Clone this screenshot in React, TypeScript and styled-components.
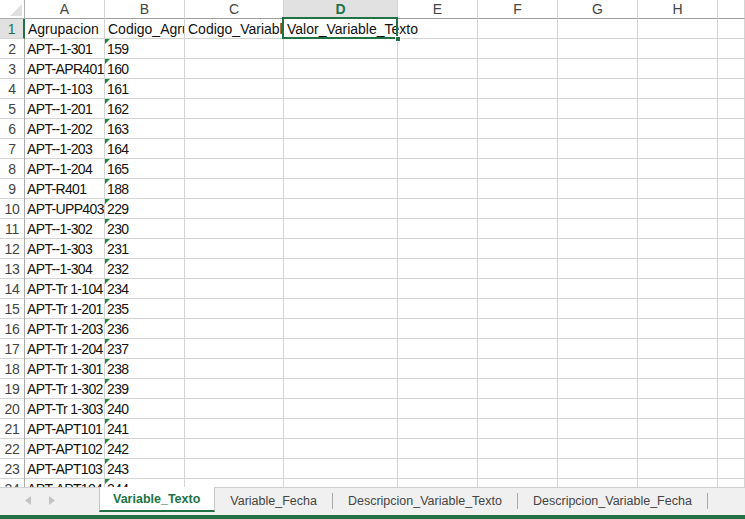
import React from "react";
import styled, { createGlobalStyle, css } from "styled-components";

const GREEN = "#217346";

const Global = createGlobalStyle`
  html, body { margin: 0; padding: 0; width: 745px; height: 519px; overflow: hidden; background: #fff; }
  * { box-sizing: border-box; }
`;

const Page = styled.div`
  width: 745px;
  height: 519px;
  display: flex;
  flex-direction: column;
  font-family: "Liberation Sans", Arial, sans-serif;
`;

const Sheet = styled.div`
  position: relative;
  height: 487px;
  overflow: hidden;
  background: #fff;
`;

const Grid = styled.div`
  display: grid;
  grid-template-columns: 25px 80px 80px 99px 114px 80px 80px 80px 80px 1fr;
  grid-template-rows: 19px;
  grid-auto-rows: 20px;
`;

const Corner = styled.div`
  position: relative;
  border-right: 1px solid #ababab;
  border-bottom: 1px solid #ababab;
  background: #fff;
  &::after {
    content: "";
    position: absolute;
    right: 2px;
    bottom: 2px;
    width: 0;
    height: 0;
    border-left: 12px solid transparent;
    border-bottom: 12px solid #dfdfdf;
  }
`;

const ColHeader = styled.div<{ $selected?: boolean }>`
  display: flex;
  align-items: center;
  justify-content: center;
  font-size: 14px;
  color: #444;
  border-right: 1px solid #d4d4d4;
  border-bottom: 1px solid #9f9f9f;
  background: #fff;
  ${(p) =>
    p.$selected &&
    css`
      background: #e1e1e1;
      color: ${GREEN};
      font-weight: bold;
    `}
`;

const RowHeader = styled.div<{ $selected?: boolean }>`
  display: flex;
  align-items: center;
  justify-content: center;
  font-size: 14px;
  color: #444;
  letter-spacing: -0.3px;
  border-right: 1px solid #ababab;
  border-bottom: 1px solid #d4d4d4;
  background: #fff;
  padding-top: 1px;
  ${(p) =>
    p.$selected &&
    css`
      background: #e1e1e1;
      color: ${GREEN};
      border-right: 2px solid ${GREEN};
    `}
`;

const Cell = styled.div<{ $clip?: boolean; $flag?: boolean; $tight?: boolean }>`
  position: relative;
  display: flex;
  align-items: center;
  padding: 1px 0 0 ${(p) => (p.$tight ? "2px" : "3px")};
  font-size: 14px;
  letter-spacing: ${(p) => (p.$tight ? "-0.65px" : "0")};
  color: #111;
  white-space: nowrap;
  border-right: 1px solid #d4d4d4;
  border-bottom: 1px solid #d4d4d4;
  overflow: ${(p) => (p.$clip ? "hidden" : "visible")};
  ${(p) =>
    p.$flag &&
    css`
      &::before {
        content: "";
        position: absolute;
        left: 0;
        top: 0;
        width: 0;
        height: 0;
        border-top: 5px solid #1e8a3a;
        border-right: 5px solid transparent;
      }
    `}
`;

const Selection = styled.div`
  position: absolute;
  left: 282px;
  top: 17px;
  width: 116px;
  height: 22px;
  border: 2px solid ${GREEN};
  pointer-events: none;
`;

const FillHandle = styled.div`
  position: absolute;
  left: 395px;
  top: 36px;
  width: 6px;
  height: 6px;
  background: ${GREEN};
  border: 1px solid #fff;
`;

const TabBar = styled.div`
  height: 28px;
  display: flex;
  align-items: flex-start;
  background: #f0f0f0;
  border-top: 1px solid #d0d0d0;
`;

const Nav = styled.div`
  width: 99px;
  height: 100%;
  display: flex;
  align-items: center;
  gap: 18px;
  padding-left: 25px;
  padding-bottom: 2px;
`;

const Tab = styled.div<{ $active?: boolean }>`
  font-size: 12.5px;
  white-space: nowrap;
  padding: 0 15px;
  ${(p) =>
    p.$active
      ? css`
          margin-top: -1px;
          height: 25px;
          display: flex;
          align-items: center;
          padding: 0 14px 0 13px;
          background: #fff;
          color: ${GREEN};
          font-weight: bold;
          border-left: 1px solid #c6c6c6;
          border-right: 1px solid #c6c6c6;
          border-bottom: 2px solid ${GREEN};
        `
      : css`
          margin-top: 5px;
          height: 16px;
          line-height: 16px;
          color: #444;
          border-right: 1px solid #ababab;
        `}
`;

const GreenBar = styled.div`
  height: 4px;
  background: ${GREEN};
`;

const cols = ["A", "B", "C", "D", "E", "F", "G", "H", ""];

const data: [string, string][] = [
  ["APT--1-301", "159"],
  ["APT-APR401", "160"],
  ["APT--1-103", "161"],
  ["APT--1-201", "162"],
  ["APT--1-202", "163"],
  ["APT--1-203", "164"],
  ["APT--1-204", "165"],
  ["APT-R401", "188"],
  ["APT-UPP403", "229"],
  ["APT--1-302", "230"],
  ["APT--1-303", "231"],
  ["APT--1-304", "232"],
  ["APT-Tr 1-104", "234"],
  ["APT-Tr 1-201", "235"],
  ["APT-Tr 1-203", "236"],
  ["APT-Tr 1-204", "237"],
  ["APT-Tr 1-301", "238"],
  ["APT-Tr 1-302", "239"],
  ["APT-Tr 1-303", "240"],
  ["APT-APT101", "241"],
  ["APT-APT102", "242"],
  ["APT-APT103", "243"],
  ["APT-APT104", "244"],
];

const Arrow = ({ dir }: { dir: "left" | "right" }) => (
  <svg width="6" height="9" viewBox="0 0 6 9">
    <path d={dir === "left" ? "M6 0 L0 4.5 L6 9 Z" : "M0 0 L6 4.5 L0 9 Z"} fill="#c4c4c4" />
  </svg>
);

const Empty = () => (
  <>
    {[0, 1, 2, 3, 4].map((i) => (
      <Cell key={i} />
    ))}
  </>
);

export default function App() {
  return (
    <Page>
      <Global />
      <Sheet>
        <Grid>
          <Corner />
          {cols.map((c, i) => (
            <ColHeader key={i} $selected={c === "D"}>
              {c}
            </ColHeader>
          ))}
          <RowHeader $selected>1</RowHeader>
          <Cell $clip>Agrupacion</Cell>
          <Cell $clip>Codigo_Agrupacion</Cell>
          <Cell $clip>Codigo_Variable</Cell>
          <Cell>Valor_Variable_Texto</Cell>
          <Empty />
          {data.map(([a, b], i) => (
            <React.Fragment key={i}>
              <RowHeader>{i + 2}</RowHeader>
              <Cell $clip $tight>
                {a}
              </Cell>
              <Cell $clip $flag $tight>
                {b}
              </Cell>
              <Cell />
              <Cell />
              <Empty />
            </React.Fragment>
          ))}
        </Grid>
        <Selection />
        <FillHandle />
      </Sheet>
      <TabBar>
        <Nav>
          <Arrow dir="left" />
          <Arrow dir="right" />
        </Nav>
        <Tab $active>Variable_Texto</Tab>
        <Tab>Variable_Fecha</Tab>
        <Tab>Descripcion_Variable_Texto</Tab>
        <Tab>Descripcion_Variable_Fecha</Tab>
      </TabBar>
      <GreenBar />
    </Page>
  );
}
